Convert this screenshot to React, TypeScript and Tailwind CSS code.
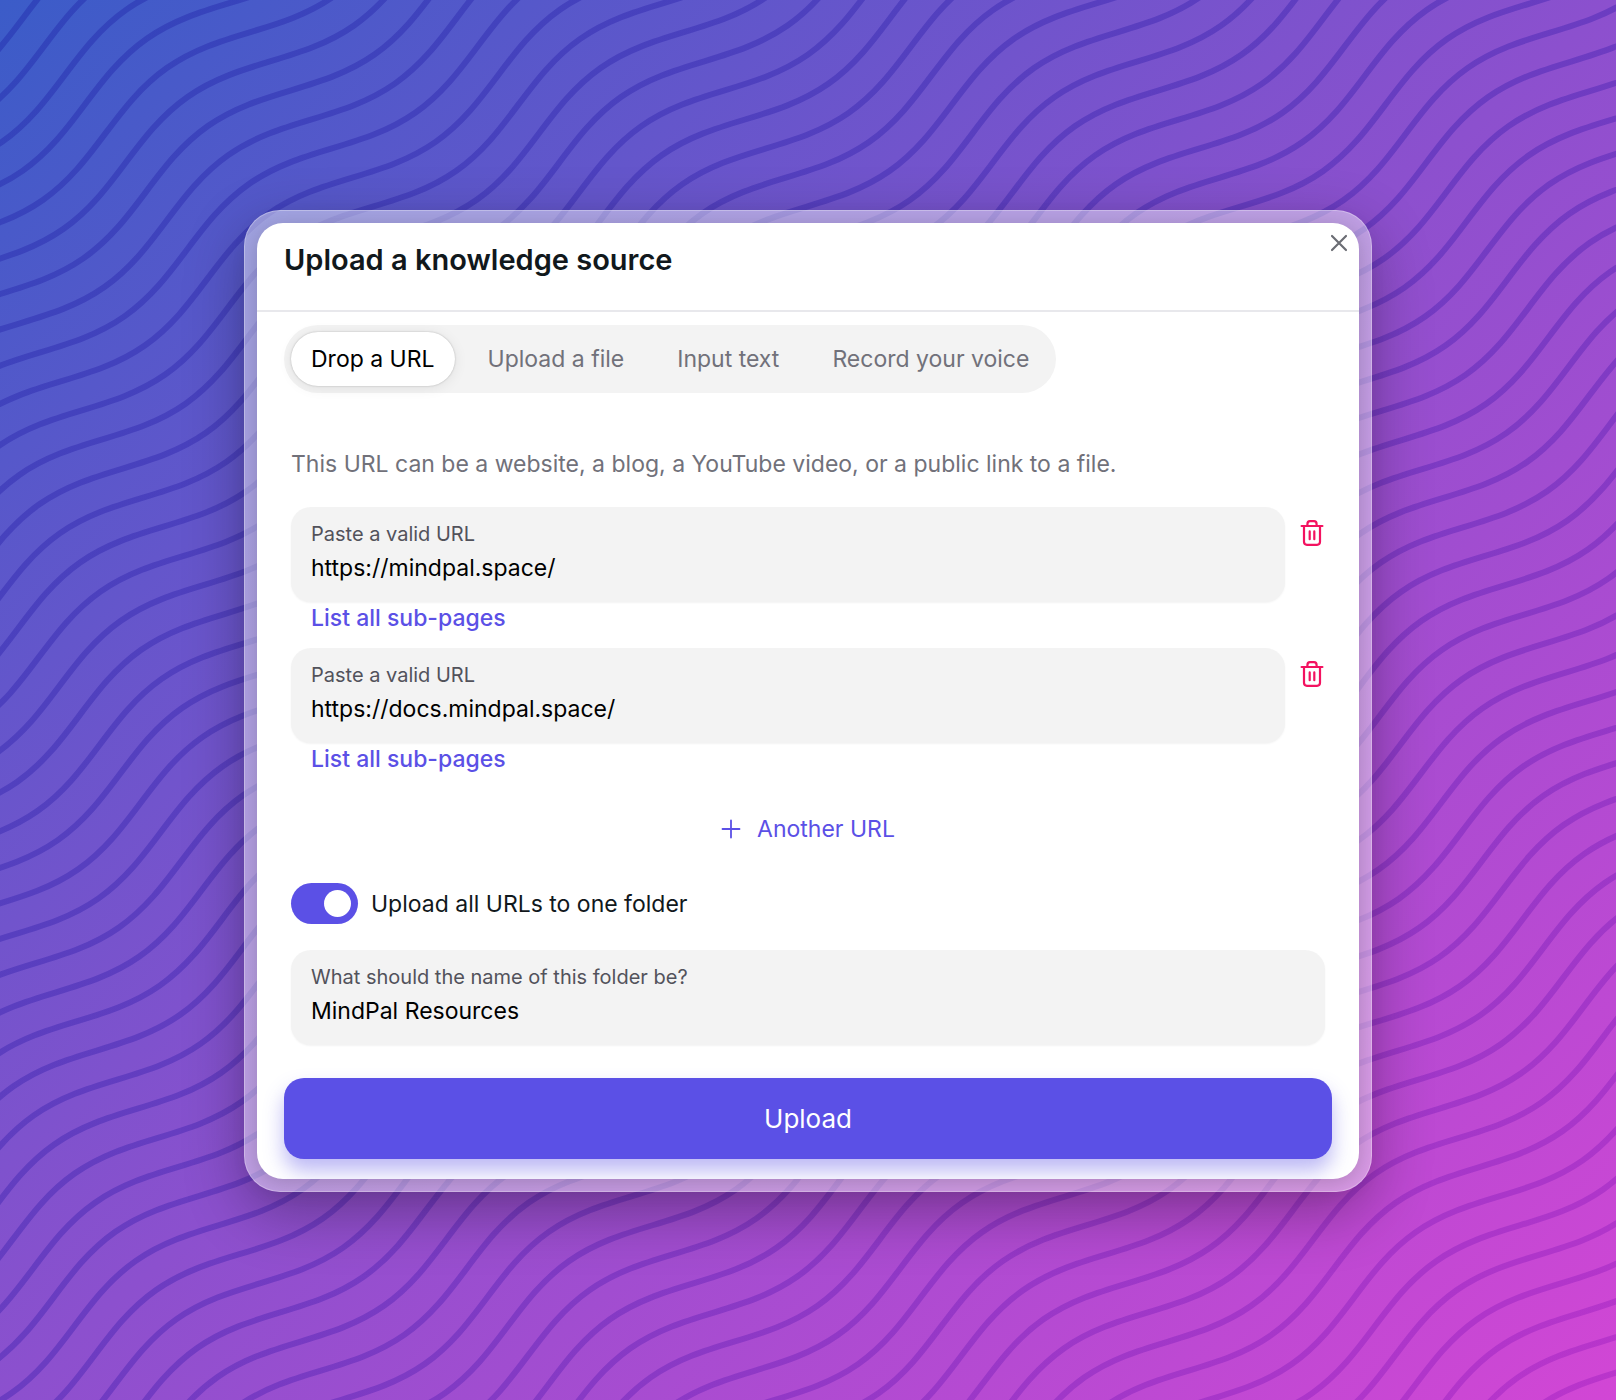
import { useState } from "react";

const WAVE_ROWS = Array.from({ length: 84 }, (_, i) => i - 12);
const ROW_GAP = 35.53;

// One long sine-like stroke; each period is 355 units wide.
const WAVE_PATH = (() => {
  const half = 177.5;
  const handle = 64.6;
  const low = 9.3;
  const high = 46.3;
  let x = 98 - 355 * 5;
  let up = true;
  let d = `M${x} ${low}`;
  for (let i = 0; i < 26; i++) {
    const from = up ? low : high;
    const to = up ? high : low;
    d += `C${x + handle} ${from} ${x + half - handle} ${to} ${x + half} ${to}`;
    x += half;
    up = !up;
  }
  return d;
})();

function WaveBackground() {
  return (
    <svg className="absolute inset-0 h-full w-full" aria-hidden="true">
      <defs>
        <linearGradient id="waveInk" gradientUnits="userSpaceOnUse" x1="0" y1="0" x2="218" y2="2105">
          <stop offset="0" stopColor="rgb(10,0,148)" />
          <stop offset="0.5" stopColor="rgb(10,0,155)" />
          <stop offset="1" stopColor="rgb(120,0,176)" />
        </linearGradient>
      </defs>
      <g transform="rotate(-35)" fill="none" stroke="url(#waveInk)" strokeWidth="6" strokeOpacity="0.25">
        {WAVE_ROWS.map((row) => (
          <Wave key={row} offset={row * ROW_GAP} />
        ))}
      </g>
    </svg>
  );
}

function Wave({ offset }: { offset: number }) {
  const d = WAVE_PATH.replace(/(-?[\d.]+) (-?[\d.]+)/g, (_, x, y) => `${x} ${Number(y) + offset}`);
  return <path d={d} />;
}

function TrashIcon() {
  return (
    <svg width="24" height="28" viewBox="0 0 24 28" fill="none" stroke="currentColor" strokeWidth="2.2" strokeLinecap="round" strokeLinejoin="round" aria-hidden="true">
      <path d="M1.6 7h20.8" />
      <path d="M7.4 6.6V5.2C7.4 3.4 8.4 2.2 10 2.200h4c1.600 0 2.600 1.200 2.600 3V6.600" />
      <path d="M4 7.200V22.800c0 1.800 1.200 3 3 3h10c1.800 0 3-1.200 3-3V7.200" />
      <path d="M9.700 12.400v7.800M14.300 12.400v7.800" />
    </svg>
  );
}

type FieldProps = { id: string; label: string; value: string; onChange: (v: string) => void };

function Field({ id, label, value, onChange }: FieldProps) {
  return (
    <div className="min-w-0 flex-1 rounded-[20px] bg-[#f3f3f3] px-5 pt-[13px] pb-[14px] shadow-[0_1px_2px_rgba(0,0,0,0.05)]">
      <label htmlFor={id} className="block text-[20px] leading-7 text-[#52525b]">
        {label}
      </label>
      <input
        id={id}
        value={value}
        onChange={(e) => onChange(e.target.value)}
        className="block h-10 w-full bg-transparent text-[23px] text-black outline-none"
      />
    </div>
  );
}

const TABS = ["Drop a URL", "Upload a file", "Input text", "Record your voice"];

export default function App() {
  const [tab, setTab] = useState(0);
  const [urls, setUrls] = useState(["https://mindpal.space/", "https://docs.mindpal.space/"]);
  const [oneFolder, setOneFolder] = useState(true);
  const [folder, setFolder] = useState("MindPal Resources");

  return (
    <main className="relative flex min-h-screen items-center justify-center overflow-hidden bg-[linear-gradient(to_bottom_right,#3b5cc8,#8c50ce_50%,#d246d5)] px-6 pt-[26px] pb-6 font-['Inter',sans-serif] text-[23px] leading-8 text-[#11181c]">
      <WaveBackground />
      <div className="relative w-full max-w-[1128px] rounded-[36px] border border-white/30 bg-white/45 p-3 shadow-[0_20px_60px_rgba(0,0,0,0.3)]">
        <section role="dialog" aria-labelledby="title" className="relative overflow-hidden rounded-[26px] bg-white shadow-[0_4px_24px_rgba(0,0,0,0.2)]">
          <header className="border-b-2 border-[#e8e8ec] px-[27px] pt-[17px] pb-[30px]">
            <h1 id="title" className="text-[29px] leading-10 font-semibold">
              Upload a knowledge source
            </h1>
            <button type="button" aria-label="Close" className="absolute top-2 right-2 flex size-6 items-center justify-center text-[#6b6d74]">
              <svg width="18" height="18" viewBox="0 0 18 18" stroke="currentColor" strokeWidth="2.2" strokeLinecap="round" aria-hidden="true">
                <path d="M2 2l14 14M16 2L2 16" />
              </svg>
            </button>
          </header>

          <div className="px-[27px] pt-[13px] pb-5">
            <div role="tablist" className="inline-flex gap-[13px] rounded-full bg-[#f3f3f3] p-[7px] align-top">
              {TABS.map((name, i) => (
                <button
                  key={name}
                  type="button"
                  role="tab"
                  aria-selected={tab === i}
                  onClick={() => setTab(i)}
                  className={
                    tab === i
                      ? "h-[54px] rounded-full bg-white px-5 text-black shadow-[0_0_2px_rgba(0,0,0,0.25),0_2px_14px_rgba(0,0,0,0.08)]"
                      : "h-[54px] rounded-full px-5 text-[#71717a]"
                  }
                >
                  {name}
                </button>
              ))}
            </div>

            <div className="px-[7px] pt-[55px]">
              <p className="pb-[27px] text-[#71717a]">
                This URL can be a website, a blog, a YouTube video, or a public link to a file.
              </p>

              <ul className="flex flex-col gap-[14px]">
                {urls.map((url, i) => (
                  <li key={i}>
                    <div className="flex items-start gap-[14px]">
                      <Field
                        id={`url-${i}`}
                        label="Paste a valid URL"
                        value={url}
                        onChange={(v) => setUrls(urls.map((u, j) => (j === i ? v : u)))}
                      />
                      <button
                        type="button"
                        aria-label="Delete URL"
                        onClick={() => setUrls(urls.filter((_, j) => j !== i))}
                        className="mt-3 flex w-[26px] justify-center text-[#f31260]"
                      >
                        <TrashIcon />
                      </button>
                    </div>
                    <button type="button" className="block px-5 font-medium text-[#5b50e6]">
                      List all sub-pages
                    </button>
                  </li>
                ))}
              </ul>

              <div className="flex justify-center py-[34px]">
                <button
                  type="button"
                  onClick={() => setUrls([...urls, ""])}
                  className="flex h-10 items-center gap-4 text-[#5b50e6]"
                >
                  <svg width="20" height="20" viewBox="0 0 20 20" stroke="currentColor" strokeWidth="1.800" strokeLinecap="round" aria-hidden="true">
                    <path d="M10 1.500v17M1.500 10h17" />
                  </svg>
                  Another URL
                </button>
              </div>

              <label className="flex w-fit cursor-pointer items-center gap-[13px]">
                <input
                  type="checkbox"
                  role="switch"
                  checked={oneFolder}
                  onChange={(e) => setOneFolder(e.target.checked)}
                  className="peer sr-only"
                />
                <span className="flex h-[41px] w-[67px] items-center rounded-full bg-[#d4d4d8] px-[7px] peer-checked:justify-end peer-checked:bg-[#5b50e6]">
                  <span className="size-[27px] rounded-full bg-white" />
                </span>
                Upload all URLs to one folder
              </label>

              <div className="flex pt-[26px] pb-[33px]">
                <Field id="folder" label="What should the name of this folder be?" value={folder} onChange={setFolder} />
              </div>
            </div>

            <button
              type="button"
              className="block h-[81px] w-full rounded-[20px] bg-[#5b50e6] text-[26px] text-white shadow-[0_12px_20px_rgba(91,80,230,0.4)]"
            >
              Upload
            </button>
          </div>
        </section>
      </div>
    </main>
  );
}
